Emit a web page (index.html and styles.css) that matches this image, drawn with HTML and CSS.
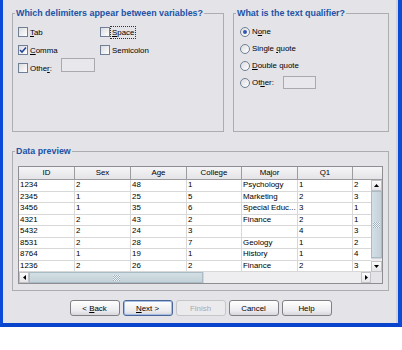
FILE: index.html
```html
<!DOCTYPE html>
<html lang="en">

<head>
    <meta charset="UTF-8">
    <title>Text Import Wizard</title>
    <link rel="stylesheet" href="styles.css">
</head>

<body>

    <div class="window">
        <div class="top-row">
            <fieldset class="group delims">
                <legend>Which delimiters appear between variables?</legend>
                <div class="options">
                    <label class="opt"><span class="box"></span><span><u>T</u>ab</span></label>
                    <label class="opt"><span class="box"></span><span class="focus"><u>S</u>pace</span></label>
                    <label class="opt">
                        <span class="box">
                            <svg width="8" height="8" viewBox="0 0 8 8"><polyline points="1,4 3,6 7,1.5" fill="none" stroke="#24479c" stroke-width="1.6"/></svg>
                        </span>
                        <span><u>C</u>omma</span>
                    </label>
                    <label class="opt"><span class="box"></span><span>Semicolon</span></label>
                    <label class="opt"><span class="box"></span><span>Othe<u>r</u>:</span><span class="field"></span></label>
                </div>
            </fieldset>

            <fieldset class="group quals">
                <legend>What is the text qualifier?</legend>
                <div class="options">
                    <label class="opt"><span class="radio on"></span><span>N<u>o</u>ne</span></label>
                    <label class="opt"><span class="radio"></span><span>Single <u>q</u>uote</span></label>
                    <label class="opt"><span class="radio"></span><span><u>D</u>ouble quote</span></label>
                    <label class="opt"><span class="radio"></span><span>Ot<u>h</u>er:</span><span class="field"></span></label>
                </div>
            </fieldset>
        </div>

        <fieldset class="group preview">
            <legend>Data preview</legend>
            <div class="preview-body">
                <div class="pane">
                    <div class="thead">
                        <div class="th">ID</div>
                        <div class="th">Sex</div>
                        <div class="th">Age</div>
                        <div class="th">College</div>
                        <div class="th">Major</div>
                        <div class="th">Q1</div>
                        <div class="th last"></div>
                    </div>

                    <div class="tbody" id="rows"></div>

                    <div class="vscroll">
                        <div class="arrow"><svg width="5" height="3" viewBox="0 0 5 3"><polygon points="0,3 5,3 2.5,0" fill="#000"/></svg></div>
                        <div class="thumb v"><span class="grip"></span></div>
                        <div class="track"></div>
                        <div class="arrow"><svg width="5" height="3" viewBox="0 0 5 3"><polygon points="0,0 5,0 2.5,3" fill="#000"/></svg></div>
                    </div>

                    <div class="hscroll">
                        <div class="arrow"><svg width="3" height="5" viewBox="0 0 3 5"><polygon points="3,0 3,5 0,2.5" fill="#000"/></svg></div>
                        <div class="thumb h"><span class="grip"></span></div>
                        <div class="track"></div>
                        <div class="arrow"><svg width="3" height="5" viewBox="0 0 3 5"><polygon points="0,0 0,5 3,2.5" fill="#000"/></svg></div>
                    </div>

                    <div class="corner"></div>
                </div>
            </div>
        </fieldset>

        <div class="buttons">
            <button type="button" class="btn">&lt; <u>B</u>ack</button>
            <button type="button" class="btn default"><u>N</u>ext &gt;</button>
            <button type="button" class="btn" disabled>Finish</button>
            <button type="button" class="btn">Cancel</button>
            <button type="button" class="btn">Help</button>
        </div>
    </div>

    <script>
        // preview rows: ID, Sex, Age, College, Major, Q1, Q2
        var data = [
            ["1234", "2", "48", "1", "Psychology", "1", "2"],
            ["2345", "1", "25", "5", "Marketing", "2", "3"],
            ["3456", "1", "35", "6", "Special Educ...", "3", "1"],
            ["4321", "2", "43", "2", "Finance", "2", "1"],
            ["5432", "2", "24", "3", "", "4", "3"],
            ["8531", "2", "28", "7", "Geology", "1", "2"],
            ["8764", "1", "19", "1", "History", "1", "4"],
            ["1236", "2", "26", "2", "Finance", "2", "3"]
        ];

        var rows = document.getElementById("rows");
        for (var i = 0; i < data.length; i++) {
            var row = document.createElement("div");
            row.className = "tr";
            for (var j = 0; j < data[i].length; j++) {
                var cell = document.createElement("div");
                cell.className = "td";
                cell.textContent = data[i][j];
                row.appendChild(cell);
            }
            rows.appendChild(row);
        }
    </script>
</body>

</html>
```

FILE: styles.css
```css
body {
    margin: 0;
    background-color: #fff;
    font-family: "Liberation Sans", Arial, sans-serif;
    font-size: 7.9px;
    color: #000;
}

.window {
    width: 402px;
    height: 327px;
    box-sizing: border-box;
    padding: 7px 0 0 9px;
    background-color: #e4e4e8;
    border-left: 3px solid #0b4bd8;
    border-right: 4px solid #0b4bd8;
    border-bottom: 4px solid #0944cc;
    box-shadow: inset -2px 0 0 #d4d4d8;
}

.top-row {
    display: flex;
    gap: 9px;
}

.group {
    margin: 0;
    padding: 0;
    min-width: 0;
    box-sizing: border-box;
    border: 1px solid #adadb0;
}

.group legend {
    margin-left: 2px;
    padding: 0 1px;
    font-size: 8.9px;
    font-weight: bold;
    line-height: 12px;
    color: #2152a6;
}

.delims {
    width: 212px;
}

.quals {
    width: 156px;
}

.options {
    display: grid;
    grid-template-columns: 82px auto;
    grid-auto-rows: 18px;
    align-content: start;
    height: 112px;
    box-sizing: border-box;
    padding: 4px 0 0 5px;
}

.quals .options {
    grid-template-columns: auto;
    grid-auto-rows: 17px;
    padding-left: 6px;
}

.opt {
    display: flex;
    align-items: center;
    gap: 2px;
    white-space: nowrap;
}

u {
    text-underline-offset: 1px;
}

.box {
    width: 10px;
    height: 10px;
    box-sizing: border-box;
    display: flex;
    align-items: center;
    justify-content: center;
    border: 1px solid #6f7f96;
    background: linear-gradient(135deg, #dcdce0, #ffffff);
}

.radio {
    width: 10px;
    height: 10px;
    box-sizing: border-box;
    display: flex;
    align-items: center;
    justify-content: center;
    border: 1px solid #6f7f96;
    border-radius: 50%;
    background: linear-gradient(135deg, #dcdce0, #ffffff);
}

.radio.on::after {
    content: "";
    width: 4px;
    height: 4px;
    border-radius: 50%;
    background-color: #3557ad;
}

.focus {
    outline: 1px dotted #333;
    outline-offset: 1px;
}

.field {
    width: 34px;
    height: 14px;
    box-sizing: border-box;
    margin: 0 0 6px 7px;
    border: 1px solid #a9a9ae;
    background-color: #e8e8ec;
}

.quals .field {
    width: 33px;
    height: 13px;
    margin: 0 0 0 7px;
}

.preview {
    width: 377px;
    margin-top: 13px;
}

.preview-body {
    padding: 9px 0 6px 5px;
}

.pane {
    display: grid;
    grid-template-columns: 352px 11px;
    grid-template-rows: 13px 92px 11px;
    width: fit-content;
    border: 1px solid #8e8e92;
}

.thead {
    grid-column: 1 / 3;
    display: flex;
    overflow: hidden;
    background: linear-gradient(#f5f5f7, #e3e3e7);
}

.th {
    flex: none;
    width: 56px;
    height: 13px;
    box-sizing: border-box;
    border-right: 1px solid #9c9ca0;
    border-bottom: 1px solid #9c9ca0;
    text-align: center;
    line-height: 12px;
}

.th:nth-child(4),
.th:nth-child(6) {
    width: 55px;
}

.th.last {
    flex: 1;
    border-right: none;
}

.tbody {
    overflow: hidden;
    background-color: #fff;
}

.tr {
    display: flex;
    height: 11.5px;
    box-sizing: border-box;
    border-bottom: 1px solid #d8d8d8;
}

.td {
    flex: none;
    width: 56px;
    box-sizing: border-box;
    padding-left: 1px;
    border-right: 1px solid #d8d8d8;
    line-height: 10.5px;
    white-space: nowrap;
    overflow: hidden;
}

.td:nth-child(4),
.td:nth-child(6) {
    width: 55px;
}

.vscroll {
    display: flex;
    flex-direction: column;
    background-color: #eeeef0;
}

.hscroll {
    display: flex;
    background-color: #eeeef0;
}

.arrow {
    flex: none;
    width: 11px;
    height: 11px;
    box-sizing: border-box;
    display: flex;
    align-items: center;
    justify-content: center;
    background: linear-gradient(#fbfbfb, #e6e6ea);
    border: 1px solid #c2c2c6;
}

.hscroll .arrow {
    width: 10px;
}

.thumb {
    flex: none;
    display: flex;
    align-items: center;
    justify-content: center;
    box-sizing: border-box;
    border: 1px solid #a9bcc6;
}

.thumb.v {
    height: 67px;
    background: linear-gradient(90deg, #d3dfe4, #c3d2d9);
}

.thumb.h {
    width: 174px;
    background: linear-gradient(#d3dfe4, #c3d2d9);
}

.grip {
    width: 7px;
    height: 6px;
    background: repeating-conic-gradient(#9fb2bd 0 25%, #eef3f5 0 50%);
    background-size: 2px 2px;
}

.track {
    flex: 1;
    border-left: 1px solid #d6d6da;
}

.vscroll .track {
    border-left: none;
    border-top: 1px solid #d6d6da;
}

.corner {
    background-color: #e4e4e8;
}

.buttons {
    display: flex;
    justify-content: center;
    gap: 3px;
    width: 377px;
    margin-top: 9px;
}

.btn {
    width: 50px;
    height: 16px;
    box-sizing: border-box;
    padding: 0;
    font: inherit;
    color: #000;
    border: 1px solid #7f7f84;
    border-radius: 3px;
    background: linear-gradient(#ffffff, #ececf0 70%, #d8d8dc);
}

.btn.default {
    border-color: #4a6698;
    box-shadow: inset 0 0 0 1px #a6bde6;
}

.btn:disabled {
    color: #a9a9ad;
    border-color: #c6c6ca;
    background: #ebebee;
}
```
